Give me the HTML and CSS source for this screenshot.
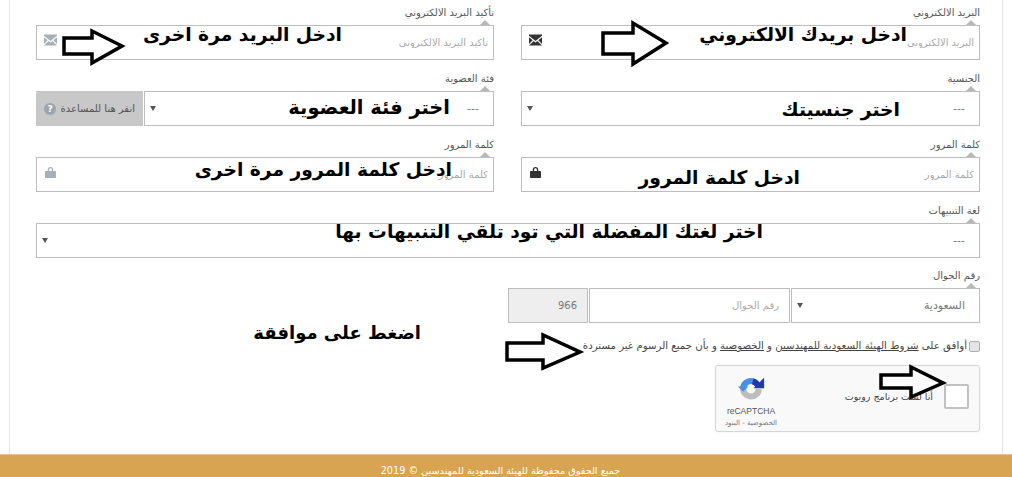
FILE: index.html
```html
<!DOCTYPE html>
<html lang="ar" dir="rtl">
<head>
    <meta charset="UTF-8">
    <meta name="viewport" content="width=device-width, initial-scale=1.0">
    <title>تسجيل عضوية</title>
    <link rel="stylesheet" href="styles.css">
</head>
<body>

<div class="page">
    <form class="reg-form">
        <!-- Two column rows -->
        <div class="form-grid">
            <div class="field">
                <label class="field-label">البريد الالكتروني</label>
                <div class="box">
                    <input class="box-input" type="email" placeholder="البريد الالكتروني" aria-label="البريد الالكتروني">
                    <svg class="icon icon-dark" viewBox="0 0 14 12"><path d="M0 0h14v1.500L7 7 0 1.500zM0 3l4 3.200-4 4zM14 3l-4 3.200 4 4zM5 7.200l2 1.600 2-1.600 5 4.800H0z"/></svg>
                </div>
            </div>
            <div class="field">
                <label class="field-label">تأكيد البريد الالكتروني</label>
                <div class="box">
                    <input class="box-input" type="email" placeholder="تأكيد البريد الالكتروني" aria-label="تأكيد البريد الالكتروني">
                    <svg class="icon icon-light" viewBox="0 0 14 12"><path d="M0 0h14v1.500L7 7 0 1.500zM0 3l4 3.200-4 4zM14 3l-4 3.200 4 4zM5 7.200l2 1.600 2-1.600 5 4.800H0z"/></svg>
                </div>
            </div>

            <div class="field">
                <label class="field-label">الجنسية</label>
                <div class="box box-select">
                    <span class="select-value">---</span>
                    <span class="caret"></span>
                </div>
            </div>
            <div class="field">
                <label class="field-label">فئة العضوية</label>
                <div class="member-row">
                    <div class="box box-select">
                        <span class="select-value">---</span>
                        <span class="caret"></span>
                    </div>
                    <div class="help-btn">
                        <span>انقر هنا للمساعدة</span>
                        <span class="help-dot">?</span>
                    </div>
                </div>
            </div>

            <div class="field">
                <label class="field-label">كلمة المرور</label>
                <div class="box">
                    <input class="box-input" type="password" placeholder="كلمة المرور" aria-label="كلمة المرور">
                    <svg class="icon icon-dark" viewBox="0 0 12 13"><path d="M3 6V4a3 3 0 0 1 6 0v2H7.500V4a1.500 1.500 0 0 0-3 0v2zM1 5.500h10a1 1 0 0 1 1 1V12a1 1 0 0 1-1 1H1a1 1 0 0 1-1-1V6.500a1 1 0 0 1 1-1z"/></svg>
                </div>
            </div>
            <div class="field">
                <label class="field-label">كلمة المرور</label>
                <div class="box">
                    <input class="box-input" type="password" placeholder="كلمة المرور" aria-label="تأكيد كلمة المرور">
                    <svg class="icon icon-light" viewBox="0 0 12 13"><path d="M3 6V4a3 3 0 0 1 6 0v2H7.500V4a1.500 1.500 0 0 0-3 0v2zM1 5.500h10a1 1 0 0 1 1 1V12a1 1 0 0 1-1 1H1a1 1 0 0 1-1-1V6.500a1 1 0 0 1 1-1z"/></svg>
                </div>
            </div>

            <div class="field field-wide">
                <label class="field-label">لغة التنبيهات</label>
                <div class="box box-select">
                    <span class="select-value">---</span>
                    <span class="caret"></span>
                </div>
            </div>
        </div>

        <!-- Phone, terms and captcha -->
        <div class="lower">
            <div class="field">
                <label class="field-label">رقم الجوال</label>
                <div class="phone-row">
                    <div class="box box-select phone-country">
                        <span class="select-value">السعودية</span>
                        <span class="caret"></span>
                    </div>
                    <div class="box phone-number">
                        <input class="box-input" type="tel" placeholder="رقم الجوال" aria-label="رقم الجوال">
                    </div>
                    <div class="box phone-code">966</div>
                </div>
            </div>

            <label class="terms">
                <input class="terms-check" type="checkbox">
                <span>أوافق على <u>شروط الهيئة السعودية للمهندسين</u> و <u>الخصوصية</u> و بأن جميع الرسوم غير مستردة</span>
            </label>

            <div class="captcha">
                <span class="captcha-check"></span>
                <span class="captcha-text">أنا لست برنامج روبوت</span>
                <div class="captcha-brand">
                    <svg class="captcha-logo" viewBox="0 0 32 32">
                        <path class="logo-arc logo-grey" d="M7 15A9 9 0 0 0 25 16"/>
                        <path class="logo-arc logo-blue" d="M21 8.500A9 9 0 0 0 7 15"/>
                        <path class="logo-fill-blue" d="M1 13H13L7 19z"/>
                        <path class="logo-arc logo-navy" d="M18 7.300A9 9 0 0 1 24 12"/>
                        <path class="logo-fill-navy" d="M31 3V15H19z"/>
                    </svg>
                    <span class="captcha-name">reCAPTCHA</span>
                    <span class="captcha-links">الخصوصية - البنود</span>
                </div>
            </div>
        </div>
    </form>

    <!-- Notes drawn on top of the screenshot -->
    <div class="notes">
        <svg class="arrows" viewBox="0 0 1012 454">
            <path d="M64 38H92V31L122 46 92 63V54H64z"/>
            <path d="M603 33H633V23L666 43 633 64V54H603z"/>
            <path d="M507 343H543V335L580 352 543 368V360H507z"/>
            <path d="M881 375H911V367L943 383 911 397V388H881z"/>
        </svg>
        <span class="note note-1">ادخل البريد مرة اخرى</span>
        <span class="note note-2">ادخل بريدك الالكتروني</span>
        <span class="note note-3">اختر فئة العضوية</span>
        <span class="note note-4">اختر جنسيتك</span>
        <span class="note note-5">ادخل كلمة المرور مرة اخرى</span>
        <span class="note note-6">ادخل كلمة المرور</span>
        <span class="note note-7">اختر لغتك المفضلة التي تود تلقي التنبيهات بها</span>
        <span class="note note-8">اضغط على موافقة</span>
    </div>
</div>

<footer class="footer">
    <span class="footer-text">جميع الحقوق محفوظة للهيئة السعودية للمهندسين © 2019</span>
</footer>

</body>
</html>
```

FILE: styles.css
```css
body {
    margin: 0;
    font-family: "DejaVu Sans", "Liberation Sans", sans-serif;
    background-color: #fff;
    height: 477px;
    overflow: hidden;
}

.page {
    display: flow-root;
    position: relative;
    height: 454px;
    margin: 0 9px;
    border-left: 1px solid #e6e6e6;
    border-right: 1px solid #e6e6e6;
    box-sizing: border-box;
}

.reg-form {
    padding: 0 22px 0 26px;
    margin-top: -1px;
}

.form-grid {
    display: grid;
    grid-template-columns: 459px 458px;
    column-gap: 27px;
    row-gap: 5px;
}

.field-wide {
    grid-column: 1 / -1;
}

.field-label {
    display: block;
    position: relative;
    height: 26px;
    box-sizing: border-box;
    padding-top: 7px;
    font-size: 10px;
    line-height: 13px;
    color: #555;
}

/* small notch under each label */
.field-label::after {
    content: "";
    position: absolute;
    right: 4px;
    bottom: 0;
    border-left: 5px solid transparent;
    border-right: 5px solid transparent;
    border-bottom: 5px solid #b8b8b8;
}

.box {
    display: flex;
    align-items: center;
    justify-content: space-between;
    height: 35px;
    box-sizing: border-box;
    background-color: #fff;
    border: 1px solid #bdbdbd;
    padding: 0 5px 0 7px;
}

.box-input {
    flex: 1;
    min-width: 0;
    border: none;
    outline: none;
    padding: 0;
    font-family: inherit;
    font-size: 10px;
    text-align: right;
    background: transparent;
}

.box-input::placeholder {
    color: #aaa;
}

.icon {
    width: 13px;
    height: 12px;
    margin-bottom: 5px;
}

.icon-dark {
    fill: #333;
}

.icon-light {
    fill: #a7b0b8;
}

.box-select {
    padding: 0 14px 0 5px;
}

.select-value {
    font-size: 11px;
    color: #777;
}

.caret {
    border-left: 3px solid transparent;
    border-right: 3px solid transparent;
    border-top: 5px solid #555;
}

.member-row {
    display: flex;
    gap: 1px;
}

.member-row .box-select {
    flex: 1;
}

.help-btn {
    display: flex;
    align-items: center;
    justify-content: space-between;
    width: 107px;
    height: 35px;
    box-sizing: border-box;
    padding: 0 8px;
    background-color: #c8c8c8;
    font-size: 10px;
    color: #555;
}

.help-dot {
    width: 12px;
    height: 12px;
    border-radius: 50%;
    background-color: #9aa5ad;
    color: #fff;
    font-size: 9px;
    font-weight: bold;
    line-height: 12px;
    text-align: center;
}

.lower {
    width: 472px;
    margin-top: 4px;
}

.phone-row {
    display: flex;
    gap: 1px;
}

.phone-country {
    width: 189px;
}

.phone-number {
    flex: 1;
    padding: 0 10px;
}

.phone-code {
    width: 80px;
    background-color: #eee;
    font-size: 10px;
    color: #777;
    padding: 0 10px;
    direction: ltr;
    justify-content: flex-end;
}

.terms {
    display: flex;
    align-items: center;
    gap: 2px;
    margin-top: 16px;
    font-size: 10.200px;
    line-height: 14px;
    color: #444;
    white-space: nowrap;
}

.terms-check {
    appearance: none;
    box-sizing: border-box;
    margin: 0;
    width: 11px;
    height: 11px;
    background-color: #e4e4e4;
    border: 1px solid #b0b0b0;
    border-radius: 2px;
}

.captcha {
    display: flex;
    align-items: flex-start;
    width: 265px;
    height: 67px;
    box-sizing: border-box;
    margin-top: 12px;
    padding: 9px 10px 0 7px;
    background-color: #f9f9f9;
    border: 1px solid #d6d6d6;
    border-radius: 3px;
    box-shadow: 0 0 2px rgba(0, 0, 0, 0.08);
}

.captcha-check {
    width: 25px;
    height: 25px;
    box-sizing: border-box;
    background-color: #fff;
    border: 2px solid #c1c1c1;
    border-radius: 2px;
    margin: 9px 0 0 11px;
}

.captcha-text {
    flex: 1;
    margin-top: 15px;
    font-size: 9.500px;
    line-height: 14px;
    color: #444;
}

.captcha-brand {
    display: flex;
    flex-direction: column;
    align-items: center;
    width: 56px;
}

.captcha-logo {
    width: 28px;
    height: 28px;
}

.captcha-name {
    font-family: "Liberation Sans", sans-serif;
    font-size: 8.500px;
    line-height: 10px;
    color: #555;
    margin-top: 3px;
}

.captcha-links {
    font-size: 7px;
    line-height: 10px;
    color: #777;
    margin-top: 2px;
}

.logo-arc {
    fill: none;
    stroke-width: 7;
}

.logo-grey {
    stroke: #bdbdbd;
}

.logo-blue {
    stroke: #4a90e2;
}

.logo-navy {
    stroke: #1c3aa9;
}

.logo-fill-blue {
    fill: #4a90e2;
}

.logo-fill-navy {
    fill: #1c3aa9;
}

.footer {
    height: 23px;
    box-sizing: border-box;
    padding: 10px 11px 0 0;
    background-color: #d8a452;
    border-top: 1px solid #e4c48e;
    color: #fff;
    font-size: 9.700px;
    line-height: 12px;
    text-align: center;
}

/* annotation layer */
.notes {
    position: absolute;
    top: 0;
    left: -10px;
    width: 1012px;
    height: 454px;
    pointer-events: none;
}

.arrows {
    position: absolute;
    top: 0;
    left: 0;
    width: 1012px;
    height: 454px;
}

.arrows path {
    fill: #fff;
    stroke: #000;
    stroke-width: 3.500px;
}

.note {
    position: absolute;
    font-size: 18.700px;
    font-weight: bold;
    line-height: 28px;
    color: #000;
    white-space: nowrap;
}

.note-1 { right: 670px; top: 21px; }
.note-2 { right: 105px; top: 21px; }
.note-3 { right: 562px; top: 94px; font-size: 19.400px; }
.note-4 { right: 112px; top: 96px; }
.note-5 { right: 560px; top: 156px; }
.note-6 { right: 212px; top: 164px; }
.note-7 { right: 249px; top: 218px; }
.note-8 { right: 591px; top: 319px; font-size: 18px; }
```
